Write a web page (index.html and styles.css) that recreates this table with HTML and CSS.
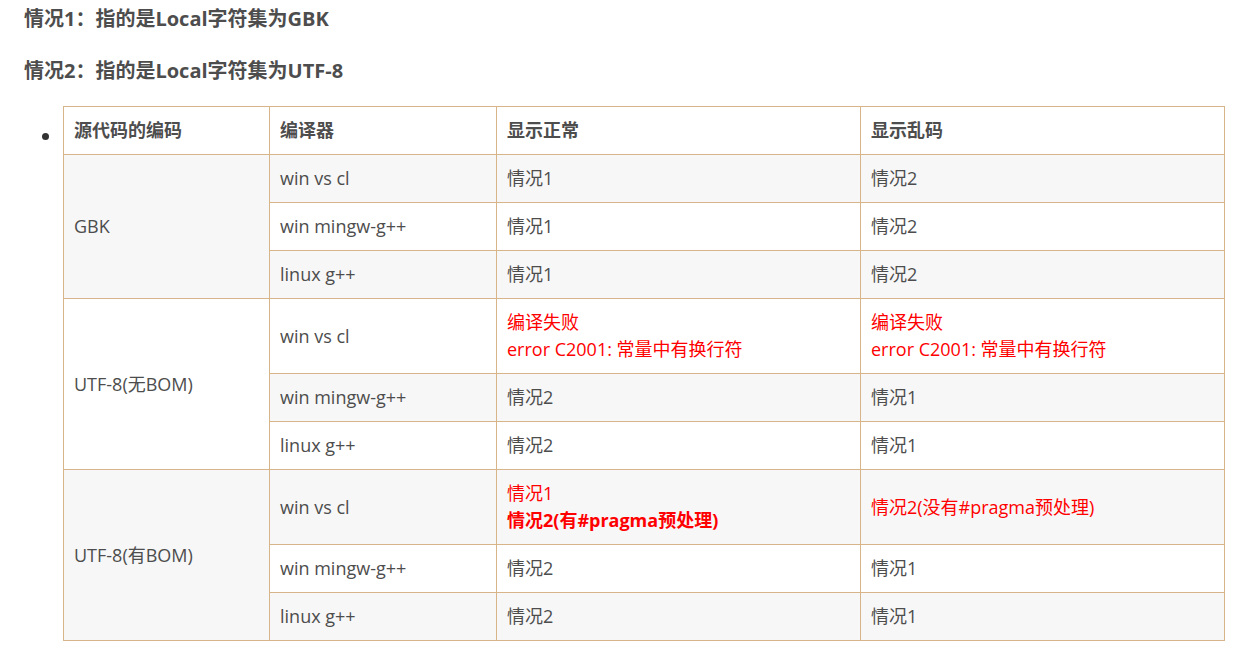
FILE: index.html
```html
<!DOCTYPE html>
<html lang="zh-CN">
<head>
<meta charset="utf-8">
<link rel="stylesheet" href="styles.css">
</head>
<body>
<div class="page">
  <p class="heading">情况1：指的是Local字符集为GBK</p>
  <p class="heading">情况2：指的是Local字符集为UTF-8</p>
  <ul class="list">
    <li>
      <table class="enc">
        <colgroup>
          <col class="c1"><col class="c2"><col class="c3"><col class="c4">
        </colgroup>
        <thead>
          <tr><th>源代码的编码</th><th>编译器</th><th>显示正常</th><th>显示乱码</th></tr>
        </thead>
        <tbody>
          <tr><td rowspan="3">GBK</td><td>win vs cl</td><td>情况1</td><td>情况2</td></tr>
          <tr><td>win mingw-g++</td><td>情况1</td><td>情况2</td></tr>
          <tr><td>linux g++</td><td>情况1</td><td>情况2</td></tr>
          <tr><td rowspan="3">UTF-8(无BOM)</td><td>win vs cl</td><td class="red">编译失败<br>error C2001: 常量中有换行符</td><td class="red">编译失败<br>error C2001: 常量中有换行符</td></tr>
          <tr><td>win mingw-g++</td><td>情况2</td><td>情况1</td></tr>
          <tr><td>linux g++</td><td>情况2</td><td>情况1</td></tr>
          <tr><td rowspan="3">UTF-8(有BOM)</td><td>win vs cl</td><td class="red">情况1<br><strong>情况2(有#pragma预处理)</strong></td><td class="red">情况2(没有#pragma预处理)</td></tr>
          <tr><td>win mingw-g++</td><td>情况2</td><td>情况1</td></tr>
          <tr><td>linux g++</td><td>情况2</td><td>情况1</td></tr>
        </tbody>
      </table>
    </li>
  </ul>
</div>
</body>
</html>
```
FILE: styles.css
```css
html, body {
  margin: 0;
  padding: 0;
  background: #ffffff;
}

body {
  font-family: "Open Sans", "Noto Sans CJK SC", sans-serif;
  color: #4d4d4d;
  font-size: 18px;
}

.page {
  padding: 0 15px 0 24px;
}

.heading {
  margin: 0;
  font-size: 20px;
  font-weight: 700;
  line-height: 30px;
  color: #4d4d4d;
  padding-top: 4px;
  height: 48px;
}

.heading + .heading {
  padding-top: 4px;
  height: 50px;
}

.list {
  margin: 0;
  padding: 0 0 0 39px;
}

.list li {
  list-style: disc;
}

.list li::marker {
  color: #333333;
  font-size: 20px;
}

.enc {
  border-collapse: collapse;
  width: 1162px;
  table-layout: fixed;
  font-size: 18px;
  line-height: 27px;
}

.c1 { width: 206px; }
.c2 { width: 227px; }
.c3 { width: 364px; }
.c4 { width: 364px; }

.enc th,
.enc td {
  border: 1px solid #d7b589;
  padding: 10px 10px;
  text-align: left;
  vertical-align: middle;
  color: #4d4d4d;
}

.enc th {
  font-weight: 700;
  background: #ffffff;
}

.enc tbody tr:nth-child(odd) {
  background: #f7f7f7;
}

.enc tbody tr:nth-child(even) {
  background: #ffffff;
}

.enc td.red {
  color: #ff0000;
}

.enc td.red strong {
  font-weight: 700;
}
```
